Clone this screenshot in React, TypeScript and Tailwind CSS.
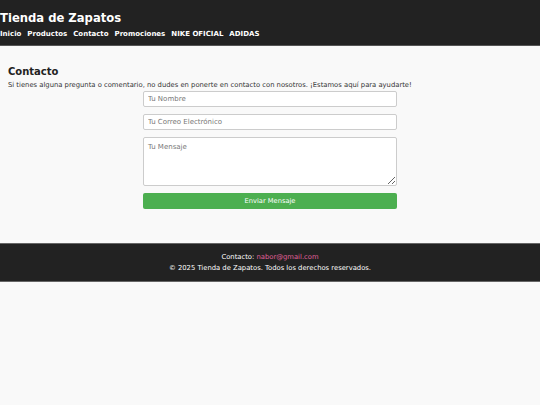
export default function App() {
  return (
    <div className="min-h-[405px] bg-[#f9f9f9] text-[#333]" style={{ fontFamily: '"DejaVu Sans", Verdana, sans-serif' }}>
      <header className="bg-[#222] text-white h-[46px] pt-[10px] border-b border-[#555]">
        <h1 className="text-[11.6px] font-bold leading-[16px]">Tienda de Zapatos</h1>
        <nav className="flex gap-[6px] text-[7px] font-bold mt-[3px] leading-[10px]">
          <span>Inicio</span>
          <span>Productos</span>
          <span>Contacto</span>
          <span>Promociones</span>
          <span>NIKE OFICIAL</span>
          <span>ADIDAS</span>
        </nav>
      </header>
      <main className="px-[8px] pt-[18px] pb-[34px]">
        <h2 className="text-[10px] font-bold leading-[16px] text-[#222]">Contacto</h2>
        <p className="text-[6.8px] leading-[10px]">Si tienes alguna pregunta o comentario, no dudes en ponerte en contacto con nosotros. ¡Estamos aquí para ayudarte!</p>
        <form className="w-[254px] mx-auto flex flex-col gap-[7px] mt-[1px]">
          <input placeholder="Tu Nombre" className="h-[16px] border border-[#ccc] rounded-[2px] bg-white px-[4px] text-[7px] placeholder:text-[#777]" />
          <input placeholder="Tu Correo Electrónico" className="h-[16px] border border-[#ccc] rounded-[2px] bg-white px-[4px] text-[7px] placeholder:text-[#777]" />
          <textarea placeholder="Tu Mensaje" className="h-[49px] border border-[#ccc] rounded-[2px] bg-white px-[4px] py-[4px] text-[7px] placeholder:text-[#777]" />
          <button type="button" className="h-[16px] bg-[#4caf50] text-white rounded-[2px] text-[6.7px]">Enviar Mensaje</button>
        </form>
      </main>
      <footer className="bg-[#222] text-white text-center text-[6.8px] leading-[11px] h-[39px] pt-[8px] border-y border-[#666]">
        <p>Contacto: <span className="text-[#e0609a]">nabor@gmail.com</span></p>
        <p>© 2025 Tienda de Zapatos. Todos los derechos reservados.</p>
      </footer>
    </div>
  );
}
